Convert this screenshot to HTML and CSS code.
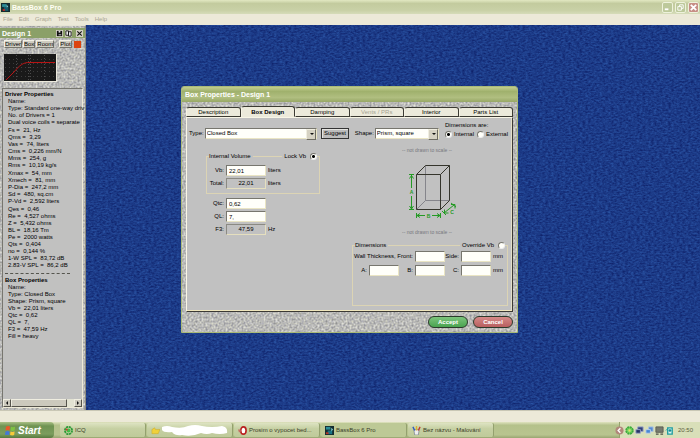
FILE: index.html
```html
<!DOCTYPE html>
<html lang="en">
<head>
<meta charset="utf-8">
<title>BassBox 6 Pro</title>
<link rel="stylesheet" href="styles.css">
</head>
<body>
<svg class="defs" aria-hidden="true">
  <filter id="sea" x="0" y="0" width="100%" height="100%" color-interpolation-filters="sRGB">
    <feTurbulence type="fractalNoise" baseFrequency="0.35 0.6" numOctaves="2" seed="4"/>
    <feColorMatrix values="0.14 0 0 0 0.04  0.26 0 0 0 0.1  0.3 0 0 0 0.38  0 0 0 0 1"/>
  </filter>
  <filter id="stone" x="0" y="0" width="100%" height="100%" color-interpolation-filters="sRGB">
    <feTurbulence type="fractalNoise" baseFrequency="0.5" numOctaves="2" seed="9"/>
    <feColorMatrix values="0.5 0 0 0 0.48  0.5 0 0 0 0.48  0.4 0.1 0 0 0.47  0 0 0 0 1"/>
  </filter>
</svg>

<header class="titlebar">
  <svg class="app-icon" viewBox="0 0 16 16"><rect width="16" height="16" fill="#142c30"/><path d="M2 2h8v5H2z" fill="#2a8d96"/><path d="M5 7h8v7H5z" fill="#175c6a"/><path d="M3 11h4v3H3z" fill="#c42a22"/><path d="M10 3l3 3-3 2z" fill="#83d5d8"/></svg>
  <h1>BassBox 6 Pro</h1>
  <div class="win-buttons">
    <button aria-label="Minimize"><svg viewBox="0 0 10 10"><path d="M2 7h4" stroke="#fff" stroke-width="2"/></svg></button>
    <button aria-label="Restore"><svg viewBox="0 0 10 10"><path d="M4 4V2h4v4H6M2 4h4v4H2z" fill="none" stroke="#fff"/></svg></button>
    <button class="close" aria-label="Close"><svg viewBox="0 0 10 10"><path d="M2 2l6 6M8 2l-6 6" stroke="#fff" stroke-width="2"/></svg></button>
  </div>
</header>
<nav class="menu">
  <a href="#">File</a><a href="#">Edit</a><a href="#">Graph</a><a href="#">Test</a><a href="#">Tools</a><a href="#">Help</a>
</nav>

<main class="workspace">
  <svg class="texture" aria-hidden="true"><rect width="100%" height="100%" filter="url(#sea)"/></svg>

  <aside class="design">
    <svg class="texture" aria-hidden="true"><rect width="100%" height="100%" filter="url(#stone)"/></svg>
    <div class="design-title">
      <h2>Design 1</h2>
      <button aria-label="Save"><svg viewBox="0 0 8 8"><path d="M1 1h6v6H1z" fill="#111"/><path d="M3 1h2v2H3z" fill="#ddd"/><path d="M3 5h3v1H3z" fill="#ddd"/></svg></button>
      <button aria-label="Copy"><svg viewBox="0 0 8 8"><path d="M1 1h3v5H1zM4 2h3v5H4z" fill="#eee" stroke="#111"/></svg></button>
      <button class="close" aria-label="Close design"><svg viewBox="0 0 8 8"><path d="M1.500 1.500l5 5M6.500 1.500l-5 5" stroke="#111" stroke-width="1.300"/></svg></button>
    </div>
    <div class="design-tools">
      <button>Driver</button><button>Box</button><button>Room</button><button class="plot">Plot</button><span class="swatch"></span>
    </div>
    <svg class="graph" viewBox="0 0 53 28" role="img" aria-label="Response">
      <rect width="53" height="28" fill="#ece9dc"/><rect width="52" height="27" fill="#191919"/>
      <path d="M1 5.500h50M1 9.500h50M1 13.500h50M1 17.500h50M1 22.500h50" stroke="#3c3c3c" stroke-dasharray="1 3"/>
      <path d="M24.500 1v25M26.500 1v25M12.500 1v25M40.500 1v25" stroke="#4c4c4c" stroke-dasharray="1 2"/>
      <path d="M2 26L10 18C15 12 19 8 26 8.500H51" fill="none" stroke="#b81414"/>
    </svg>
    <div class="listing">
      <div class="listing-text">
        <h3>Driver Properties</h3>
        <ul><li>Name:</li><li>Type: Standard one-way driv</li><li>No. of Drivers = 1</li><li>Dual voice coils = separate</li></ul>
        <ul><li>Fs =&nbsp; 21, Hz</li><li>Qms =&nbsp; 3,29</li><li>Vas =&nbsp; 74, liters</li><li>Cms =&nbsp; 0,226 mm/N</li><li>Mms =&nbsp; 254, g</li><li>Rms =&nbsp; 10,19 kg/s</li></ul>
        <ul><li>Xmax =&nbsp; 54, mm</li><li>Xmech =&nbsp; 81, mm</li><li>P-Dia =&nbsp; 247,2 mm</li><li>Sd =&nbsp; 480, sq.cm</li><li>P-Vd =&nbsp; 2,592 liters</li></ul>
        <ul><li>Qes =&nbsp; 0,46</li><li>Re =&nbsp; 4,527 ohms</li><li>Z =&nbsp; 5,432 ohms</li><li>BL =&nbsp; 18,16 Tm</li><li>Pe =&nbsp; 2000 watts</li><li>Qts =&nbsp; 0,404</li><li>no =&nbsp; 0,144 %</li><li>1-W SPL =&nbsp; 83,72 dB</li><li>2.83-V SPL =&nbsp; 86,2 dB</li></ul>
        <hr>
        <h3>Box Properties</h3>
        <ul><li>Name:</li><li>Type: Closed Box</li><li>Shape: Prism, square</li><li>Vb =&nbsp; 22,01 liters</li><li>Qtc =&nbsp; 0,62</li><li>QL =&nbsp; 7,</li><li>F3 =&nbsp; 47,59 Hz</li><li>Fill = heavy</li></ul>
      </div>
      <div class="scrollbar">
        <button aria-label="Scroll left"><svg viewBox="0 0 6 6"><path d="M4 1v4L2 3z" fill="#111"/></svg></button>
        <span class="thumb"></span>
        <button aria-label="Scroll right"><svg viewBox="0 0 6 6"><path d="M2 1v4l2-2z" fill="#111"/></svg></button>
      </div>
    </div>
  </aside>

  <section class="dialog" aria-label="Box Properties">
    <svg class="texture" aria-hidden="true"><rect width="100%" height="100%" filter="url(#stone)"/></svg>
    <h2 class="dialog-title">Box Properties - Design 1</h2>
    <div class="tabs">
      <button>Description</button><button class="active">Box Design</button><button>Damping</button><button disabled>Vents / PRs</button><button>Interior</button><button>Parts List</button>
    </div>
    <form class="page">
      <div class="choices">
        <label for="type">Type:</label>
        <span class="select type"><select id="type"><option>Closed Box</option></select></span>
        <button type="button" class="suggest">Suggest</button>
        <label for="shape">Shape:</label>
        <span class="select shape"><select id="shape"><option>Prism, square</option></select></span>
        <div class="dim-kind">
          <span>Dimensions are:</span>
          <div class="radios">
            <label><input type="radio" name="dims" checked>Internal</label>
            <label><input type="radio" name="dims">External</label>
          </div>
        </div>
      </div>
      <div class="columns">
        <div class="left">
          <fieldset>
            <legend><span>Internal Volume</span><i></i><label>Lock Vb<input type="radio" name="lock" checked></label></legend>
            <div class="fields">
              <label for="vb">Vb:</label><input id="vb" value="22,01"><span>liters</span>
              <label for="total">Total:</label><output id="total">22,01</output><span>liters</span>
            </div>
          </fieldset>
          <div class="fields tuning">
            <label for="qtc">Qtc:</label><input id="qtc" value="0,62"><span></span>
            <label for="ql">QL:</label><input id="ql" value="7,"><span></span>
            <label for="f3">F3:</label><output id="f3">47,59</output><span>Hz</span>
          </div>
        </div>
        <div class="right">
          <figure>
            <p class="note">-- not drawn to scale --</p>
            <svg class="prism" viewBox="397 156 60 70" role="img" aria-label="Prism with sides A, B and C">
              <path d="M425.500 165.500V200.500H449.500M425.500 200.500L416.500 209.500" fill="none" stroke="#85858b"/>
              <path d="M416.500 174.500H440.500V209.500H416.500zM416.500 174.500L425.500 165.500H449.500V200.500L440.500 209.500M440.500 174.500L449.500 165.500" fill="none" stroke="#35352c"/>
              <path d="M409 174.500h5M411.500 175v13M409.500 178.500l2-3 2 3M409 209.500h5M411.500 196v13M409.500 206l2 3 2-3M416.500 213v5M417 215.500h8M420 213.500l-3 2 3 2M440.500 213v5M432 215.500h8M437 213.500l3 2-3 2M444 213l10-8M444.500 209.500v3.500h4M451 204.500h4v4M442 211l4 4M451 203l5 4" fill="none" stroke="#249a24"/>
              <text x="411.500" y="194">A</text><text x="428.500" y="217.500">B</text><text x="452" y="214">C</text>
            </svg>
            <p class="note">-- not drawn to scale --</p>
          </figure>
          <fieldset class="dimensions">
            <legend><span>Dimensions</span><i></i><label>Override Vb<input type="radio" name="override"></label></legend>
            <div class="dim-grid">
              <label class="wide" for="front">Wall Thickness, Front:</label><input id="front">
              <label for="side">Side:</label><input id="side"><span>mm</span>
              <label for="a">A:</label><input id="a"><label for="b">B:</label><input id="b"><label for="c">C:</label><input id="c"><span>mm</span>
            </div>
          </fieldset>
        </div>
      </div>
    </form>
    <div class="actions"><button class="accept">Accept</button><button class="cancel">Cancel</button></div>
  </section>
</main>

<div class="status"></div>
<footer class="taskbar">
  <button class="start"><svg viewBox="0 0 12 12"><path d="M1 2q2-1.500 4.500-.5L5 6Q3 5 .5 6z" fill="#e8592a"/><path d="M6.500 2q2 1 4.500 0L10.500 6q-2 1-4.500 0z" fill="#7fc243"/><path d="M.5 7q2-1 4.500 0l-.5 4Q2.500 10 0 11z" fill="#4378d8"/><path d="M6 7q2 1 4.500 0L10 11q-2 1-4.500 0z" fill="#f6ca3a"/></svg>Start</button>
  <nav class="tasks">
    <button><svg viewBox="0 0 10 10"><circle cx="5" cy="5" r="4" fill="none" stroke="#2c9b38" stroke-width="2" stroke-dasharray="2.400 .7"/><circle cx="5" cy="5" r="2.200" fill="#41bd48"/><path d="M2 3h2v2H2z" fill="#d13a2a"/></svg>ICQ</button>
    <button class="folder" aria-label="Folder"><svg viewBox="0 0 10 10"><path d="M1 4l3-2 1 2h5L8 8.500H1z" fill="#f0d13c" stroke="#c5a424" stroke-width=".5"/></svg><svg class="smudge" viewBox="0 0 66 11" preserveAspectRatio="none"><path d="M0 2Q5 0 10 2Q20 4 26 1Q33-1 40 1Q50 3 60 1Q66 2 65 8Q58 10 50 8Q45 10 39 8Q30 12 20 10Q13 11 10 7Q2 8 0 5z" fill="#fff"/></svg></button>
    <button><svg viewBox="0 0 10 10"><ellipse cx="6" cy="5" rx="3" ry="4" fill="#fff" stroke="#b92121" stroke-width="1.800"/><path d="M0 4h3v3H1z" fill="#c56e62"/></svg>Prosim o vypocet bed...</button>
    <button class="current"><svg viewBox="0 0 10 10"><path d="M0 0h10v10H0z" fill="#142c30"/><path d="M1 1h5v3H1z" fill="#2a8d96"/><path d="M3 5h5v4H3z" fill="#197385"/><path d="M1 7h3v2H1z" fill="#b63326"/><path d="M7 2l2 2-2 2z" fill="#83d5d8"/></svg>BassBox 6 Pro</button>
    <button><svg viewBox="0 0 10 10"><path d="M2 4h6L7 10H3z" fill="#eee" stroke="#6d7687" stroke-width=".7"/><path d="M3 5L1 1" stroke="#2e58bd" stroke-width="1.500"/><path d="M5 5V0" stroke="#dbb42d" stroke-width="1.500"/><path d="M7 5l2-4" stroke="#c43932" stroke-width="1.500"/></svg>Bez názvu - Malování</button>
  </nav>
  <div class="tray">
    <button aria-label="Show hidden icons"><svg viewBox="0 0 10 10"><circle cx="5" cy="5" r="4.500" fill="#b1877a"/><path d="M6 2.500L3.500 5 6 7.500" fill="none" stroke="#fff" stroke-width="1.500"/></svg></button>
    <svg viewBox="0 0 10 10"><circle cx="5" cy="5" r="3.600" fill="#8adb6c" stroke="#3dac3c" stroke-width="2.200" stroke-dasharray="2.200 .6"/><circle cx="5" cy="5" r="1" fill="#e8e45c"/></svg>
    <svg viewBox="0 0 10 10"><path d="M3 1h6v5H3z" fill="#32417c" stroke="#99a4c7"/><path d="M1 4h5v4H1z" fill="#253467" stroke="#99a4c7"/></svg>
    <svg viewBox="0 0 10 10"><path d="M4 1h5v5H4z" fill="#558bd2" stroke="#abc3e2"/><path d="M1 4h5v4H1z" fill="#4787d6" stroke="#c1d1e7"/></svg>
    <svg viewBox="0 0 10 10"><path d="M1 1h8v6H1z" fill="#777a6e" stroke="#595b50"/><path d="M1 9h3M6 9h3" stroke="#4b4d44" stroke-width="1.500"/></svg>
    <svg viewBox="0 0 10 10"><path d="M3 2h5v7H3z" fill="#d8f4f0" stroke="#1f9da0" stroke-width="1.500"/><circle cx="5.500" cy="5" r="1.500" fill="#158b94"/><path d="M1 5l2-2" stroke="#1f9da0"/></svg>
    <time>20:50</time>
  </div>
</footer>
</body>
</html>
```

FILE: styles.css
```css
* { box-sizing: border-box; }

body {
  margin: 0;
  min-height: 100vh;
  display: flex;
  flex-direction: column;
  overflow: hidden;
  font: 6px/7px "Liberation Sans", sans-serif;
  color: #000;
}

h1, h2, h3, p, ul, figure { margin: 0; padding: 0; font-size: inherit; font-weight: inherit; }
ul { list-style: none; }
a { color: inherit; text-decoration: none; }
button, input, select, output { font: inherit; color: inherit; margin: 0; padding: 0; }
button { border: 0; background: none; white-space: nowrap; }
svg { display: block; }

.defs { position: absolute; width: 0; height: 0; }
.texture { position: absolute; inset: 0; width: 100%; height: 100%; z-index: -1; }

/* Application frame */
.titlebar {
  display: flex;
  align-items: center;
  gap: 2px;
  height: 14px;
  padding: 0 1px;
  background: linear-gradient(#e2e8c2, #c3cb9e 25%, #c9d1a7 75%, #d6dcb9);
}
.app-icon { width: 9px; height: 9px; }
.titlebar h1 { font-size: 7px; font-weight: bold; color: #fffff4; flex: 1; }
.win-buttons { display: flex; gap: 2px; }
.win-buttons button {
  width: 11px; height: 11px;
  border: 1px solid #eef2dc;
  border-radius: 2px;
  background: #bdc99b;
}
.win-buttons .close { background: #c78f86; }
.menu {
  display: flex;
  gap: 6px;
  height: 11px;
  padding: 2px 3px;
  background: #ece9d8;
  color: #aaa792;
}

.workspace {
  position: relative;
  z-index: 0;
  flex: 1;
  display: flex;
  background: #1c3a88;
}

/* Design summary */
.design {
  position: relative;
  z-index: 0;
  width: 86px;
  display: flex;
  flex-direction: column;
  padding: 2px;
  border-top: 1px solid #e6e4d4;
  border-right: 1px solid #8d8b80;
}
.design-title {
  display: flex;
  align-items: center;
  gap: 2px;
  height: 10px;
  margin: 0 -2px;
  padding: 0 2px;
  background: #8ba068;
  color: #fff;
}
.design-title h2 { flex: 1; font-size: 7px; font-weight: bold; }
.design-title button { width: 7px; height: 7px; background: #d4d0c4; }
.design-title .close { margin-left: 2px; }
.design-tools { display: flex; align-items: center; gap: 1px; margin: 2px 0 6px 2px; }
.design-tools button {
  height: 8px;
  background: #cfccc0;
  border: 1px solid;
  border-color: #f2f0e6 #77756b #77756b #f2f0e6;
  line-height: 6px;
}
.design-tools .plot { margin-left: 4px; }
.swatch { flex: none; width: 7px; height: 7px; margin-left: 1px; background: #dc4410; }
.graph { width: 53px; height: 28px; margin-left: 2px; }
.listing {
  flex: 1;
  display: flex;
  flex-direction: column;
  margin-top: 6px;
  padding: 2px 0 0 2px;
  background: #c1c1c0;
  border: 1px solid;
  border-color: #77766f #eeead7 #eeead7 #77766f;
}
.listing-text { flex: 1; white-space: nowrap; }
.listing h3 { font-weight: bold; }
.listing ul { padding: 0 0 1px 3px; }
.listing hr { height: 0; margin: 3px 12px 3px 0; border: 0; border-top: 1px dashed #55554e; }
.scrollbar { display: flex; height: 8px; margin-left: -2px; background: #e2e2d2; }
.scrollbar button, .thumb {
  background: #ccc9bd;
  border: 1px solid;
  border-color: #efede0 #55534b #55534b #efede0;
}
.scrollbar button { width: 8px; }
.scrollbar button:last-child { margin-left: auto; }
.thumb { width: 56px; }

/* Box properties window */
.dialog {
  position: absolute;
  z-index: 1;
  left: 181px;
  top: 61px;
  width: 337px;
  padding: 0 4px 4px;
  border: 1px solid #a9ba78;
  border-radius: 3px 3px 0 0;
  overflow: hidden;
}
.dialog-title {
  height: 15px;
  margin: 0 -4px;
  padding: 4px 3px;
  background: linear-gradient(#c3ce8e, #a0b16d 30%, #b0be80 70%, #98a866);
  color: #fff;
  font-size: 7px;
  font-weight: bold;
}
.tabs { display: grid; grid-template-columns: repeat(6, 1fr); align-items: end; height: 15px; }
.tabs button {
  height: 10px;
  border: 1px solid #3b3a32;
  border-left-color: #f6f4e5;
  border-radius: 3px 3px 0 0;
  background: #eceadb;
  line-height: 8px;
}
.tabs .active { height: 11px; border-bottom-color: #eceadb; font-weight: bold; }
.tabs button:disabled { color: #a5a391; }
.page {
  border: 1px solid;
  border-color: #f8f6e6 #3b3934 #3b3934 #f8f6e6;
  box-shadow: inset 0 -1px #efe6bd, inset -1px 0 #e3dfca;
  background: #c1c1c1;
  padding: 4px 4px 5px 2px;
}
.choices { display: flex; align-items: flex-end; }
.choices > label { line-height: 11px; }
.select { position: relative; height: 11px; display: block; }
.select::after {
  content: "";
  position: absolute;
  right: 3px; top: 5px;
  border: 2px solid transparent;
  border-top-color: #111;
  pointer-events: none;
}
.select::before {
  content: "";
  position: absolute;
  right: 1px; top: 1px;
  width: 8px; height: 9px;
  background: #d6d2c3;
  border: 1px solid;
  border-color: #f0eee0 #6e6c62 #6e6c62 #f0eee0;
  pointer-events: none;
}
select {
  appearance: none;
  width: 100%;
  height: 100%;
  padding: 0 10px 0 1px;
}
select, input:not([type]) {
  background: #fffffa;
  border: 1px solid;
  border-color: #77766e #eae5c4 #eae5c4 #77766e;
  border-radius: 0;
}
.type { width: 114px; margin-left: 1px; }
.shape { width: 65px; margin-left: 1px; }
.suggest {
  width: 28px;
  height: 11px;
  margin: 0 6px 0 4px;
  background: #bcbcbc;
  border: 1px solid #333;
  box-shadow: inset 1px 1px #e4e4e0;
}
.dim-kind { margin-left: 6px; white-space: nowrap; }
.radios { display: flex; gap: 3px; margin-top: 1px; }
.radios label { display: flex; align-items: center; gap: 2px; height: 9px; }
input[type="radio"] {
  appearance: none;
  width: 7px; height: 7px;
  border: 1px solid;
  border-color: #77766e #eee #eee #77766e;
  border-radius: 50%;
  background: #fffffa;
}
input[type="radio"]:checked { background: radial-gradient(circle, #000 1px, #fffffa 2px); }

.columns { display: grid; grid-template-columns: 163px 1fr; }
fieldset { min-width: 0; margin: 0; padding: 0 2px 4px 2px; border: 1px solid #dcd4b4; }
legend { display: flex; align-items: center; gap: 2px; width: 100%; height: 8px; padding: 0; }
legend i { flex: 1; height: 1px; background: #dcd4b4; }
legend label { display: flex; align-items: center; gap: 4px; }
.left { padding: 13px 32px 0 17px; }
.fields {
  display: grid;
  grid-template-columns: 15px 40px 1fr;
  gap: 2px;
  align-items: center;
}
.fields label, .dim-grid label { text-align: right; justify-self: end; white-space: nowrap; }
.fields input, .fields output, .dim-grid input { width: 100%; height: 11px; padding: 0 2px; }
.fields output {
  border: 1px solid;
  border-color: #8b8a83 #e5dfbe #e5dfbe #8b8a83;
  line-height: 9px;
  text-align: center;
}
fieldset .fields { padding-top: 5px; }
.tuning { margin: 4px 3px 0; }
.right { padding-top: 8px; }
figure { padding-right: 6px; }
.note { text-align: center; font-size: 5px; color: #77777d; }
.prism { display: block; width: 60px; height: 70px; margin: 2px auto 3px; }
.prism text { font-size: 5px; font-weight: bold; fill: #249a24; text-anchor: middle; }
.dimensions { margin-top: 5px; padding-bottom: 29px; }
.dim-grid {
  display: grid;
  grid-template-columns: 12px 30px 12px 30px 12px 30px 1fr;
  gap: 3px 2px;
  align-items: center;
  padding-top: 2px;
}
.dim-grid .wide { grid-column: span 3; }

.actions { display: flex; justify-content: flex-end; gap: 5px; margin-top: 4px; }
.actions button {
  width: 40px;
  height: 12px;
  border: 1px solid #2b3a2a;
  border-radius: 6px;
  color: #fff;
  font-weight: bold;
}
.accept { background: linear-gradient(#7cc47c, #4aa350); }
.cancel { background: linear-gradient(#d58a88, #b85f5f); }

/* Status and task bars */
.status {
  height: 12px;
  border-top: 1px solid #c9c7b5;
  background: #ece9d8;
}
.taskbar {
  display: flex;
  height: 16px;
  background: linear-gradient(#dfe3c0, #b4c18b 20%, #b8c48f 80%, #98a571);
}
.start {
  display: flex;
  align-items: center;
  gap: 2px;
  width: 54px;
  padding-left: 5px;
  background: linear-gradient(#a9bf85, #6f9352 25%, #7c9d5e 75%, #577a3e);
  border-radius: 0 4px 4px 0;
  color: #fff;
  font-size: 10px;
  font-style: italic;
  font-weight: bold;
}
.start svg { width: 11px; height: 11px; }
.tasks { flex: 1; display: flex; gap: 1px; padding: 1px 0 1px 6px; }
.tasks button {
  display: flex;
  align-items: center;
  gap: 2px;
  flex: 0 1 86px;
  min-width: 0;
  padding-left: 4px;
  border-right: 1px solid #93a06e;
  border-radius: 2px;
  background: linear-gradient(#dde3c2, #c6d0a3 40%, #bfca9a);
  color: #3a3d28;
}
.tasks svg { width: 9px; height: 9px; flex: none; }
.tasks .smudge { width: 66px; height: 11px; }
.tasks .current { background: #bdc996; }
.tray {
  display: flex;
  align-items: center;
  gap: 1px;
  padding: 0 7px 0 0;
  margin-left: 4px;
  background: #d9dfb9;
  border-left: 1px solid #96a36e;
}
.tray svg { width: 9px; height: 9px; }
.tray button { margin-left: -5px; }
.tray time { margin-left: 3px; color: #5a5c3c; }
```
